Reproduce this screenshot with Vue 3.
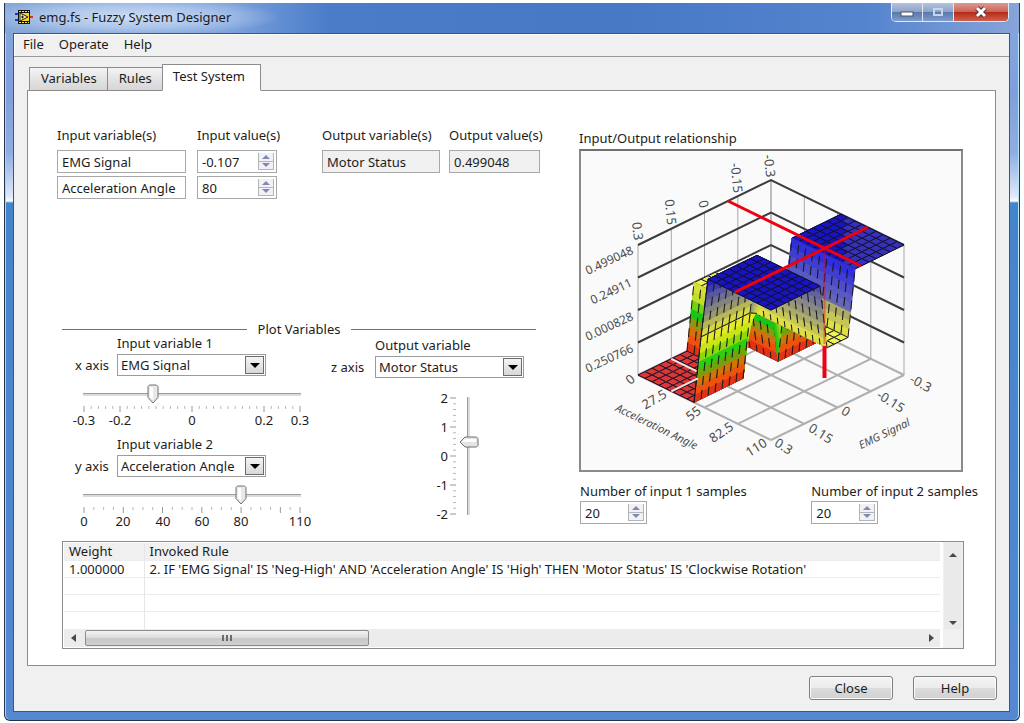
<script setup>
import { ref } from 'vue'

const menus = ['File', 'Operate', 'Help']
const inputs = ref([
  { id: 'in1', name: 'EMG Signal', value: '-0.107' },
  { id: 'in2', name: 'Acceleration Angle', value: '80' },
])
const samples = ref([
  { id: 's1', label: 'Number of input 1 samples', value: '20' },
  { id: 's2', label: 'Number of input 2 samples', value: '20' },
])

function range(n) {
  return Array.from({ length: n }, (_, i) => i)
}

const axes = ref([
  {
    id: 'x', axis: 'x axis', label: 'Input variable 1', option: 'EMG Signal',
    min: -0.3, max: 0.3, value: -0.107,
    ticks: range(31).map((i) => ({ x: 6 + i * 7.2, major: [0, 5, 15, 25, 30].includes(i) })),
    labels: [['-0.3', 6], ['-0.2', 42], ['0', 114], ['0.2', 186], ['0.3', 222]],
  },
  {
    id: 'y', axis: 'y axis', label: 'Input variable 2', option: 'Acceleration Angle',
    min: 0, max: 110, value: 80,
    ticks: range(23).map((i) => ({ x: 6 + (i * 216) / 22, major: i % 4 === 0 || i === 22 })),
    labels: [['0', 6], ['20', 45], ['40', 85], ['60', 124], ['80', 163], ['110', 222]],
  },
])
const output = ref(0.499)
const zTicks = range(21).map((i) => ({ y: 6 + i * 5.8, major: i % 5 === 0 }))
const zLabels = [['2', 6], ['1', 35], ['0', 64], ['-1', 93], ['-2', 122]]

/* Projection of the unit cube: u is the acceleration angle, v the EMG signal. */
function project(u, v, h) {
  return [638 + 133 * (u + v), 375 + 65 * (u - v) - 130 * h]
}
function points(list) {
  return list.map((p) => p.map((n) => n.toFixed(1)).join(',')).join(' ')
}
function height(i, j) {
  if (j >= 8 && j <= 11) return 0.5
  if (i <= 8) return 0
  return i === 9 ? 0.53 : 1
}

const stops = [
  [0, [220, 34, 26]], [0.1, [236, 84, 14]], [0.19, [196, 130, 10]], [0.28, [20, 200, 20]],
  [0.4, [190, 226, 10]], [0.52, [236, 236, 50]], [0.68, [150, 150, 110]],
  [0.84, [92, 92, 160]], [1, [26, 20, 190]],
]
function colour(h, shade) {
  let k = 1
  while (k < stops.length - 1 && h > stops[k][0]) k++
  const [h0, a] = stops[k - 1]
  const [h1, b] = stops[k]
  const t = Math.min(1, Math.max(0, (h - h0) / (h1 - h0)))
  const rgb = a.map((c, n) => Math.round((c + (b[n] - c) * t) * (1 - shade.mix) + shade.tone[n] * shade.mix))
  return `rgb(${rgb.join(',')})`
}
const plain = { mix: 0, tone: [0, 0, 0] }
const flatRed = { mix: 0.4, tone: [214, 90, 90] }
const pale = { mix: 0.4, tone: [255, 255, 140] }
const bluish = { mix: 0.45, tone: [60, 60, 255] }
const backlit = { mix: 0.6, tone: [72, 68, 176] }

const cells = []
for (let i = 0; i < 19; i++) {
  for (let j = 0; j < 19; j++) {
    const c = [height(i, j), height(i + 1, j), height(i + 1, j + 1), height(i, j + 1)]
    const steep = Math.max(...c) - Math.min(...c) > 0.05
    const n = steep ? 8 : 1
    const alongV = Math.abs(c[3] - c[0]) + Math.abs(c[2] - c[1]) > Math.abs(c[1] - c[0]) + Math.abs(c[2] - c[3])
    const at = (a, b) => {
      const h = c[0] * (1 - a) * (1 - b) + c[1] * a * (1 - b) + c[2] * a * b + c[3] * (1 - a) * b
      return { h, p: project((i + a) / 19, (j + b) / 19, h) }
    }
    const strips = []
    for (let k = 0; k < n; k++) {
      const a = k / n
      const b = (k + 1) / n
      const q = alongV ? [at(0, a), at(1, a), at(1, b), at(0, b)] : [at(a, 0), at(b, 0), at(b, 1), at(a, 1)]
      const h = q.reduce((s, e) => s + e.h, 0) / 4
      let shade = plain
      if (!steep && h < 0.1) shade = flatRed
      else if (!steep && h < 0.6) shade = pale
      else if (!steep && j >= 12 && (i + j) > 28) shade = backlit
      else if (steep && alongV && j >= 9 && h > 0.7) shade = bluish
      else if (steep && alongV && h > 0.4) shade = { mix: 0.25, tone: [200, 200, 120] }
      strips.push({ pts: points(q.map((e) => e.p)), fill: colour(h, shade) })
    }
    const edge = [at(0, 0).p, at(1, 0).p, at(1, 1).p, at(0, 1).p]
    let sides = [[...edge, edge[0]]]
    if (steep && alongV) sides = [[edge[0], edge[3]], [edge[1], edge[2]]]
    else if (steep) sides = [[edge[0], edge[1]], [edge[3], edge[2]]]
    cells.push({ depth: i - j, steep, strips, lines: sides.map(points) })
  }
}
cells.sort((a, b) => a.depth - b.depth)

const quarters = [0, 0.25, 0.5, 0.75, 1]
const floorLines = quarters.flatMap((q) => [
  points([project(q, 0, 0), project(q, 1, 0)]),
  points([project(0, q, 0), project(1, q, 0)]),
])
const posts = quarters.flatMap((q) => [
  points([project(0, q, 0), project(0, q, 1)]),
  points([project(q, 1, 0), project(q, 1, 1)]),
])
const levels = [0.25, 0.5, 0.75, 1].map((h) => points([project(0, 0, h), project(0, 1, h), project(1, 1, h)]))
const seams = [
  points([project(0, 0.25, 0), project(0.19, 0.25, 0)]),
  points([project(0.25, 0, 0), project(0.25, 0.2, 0)]),
]
const outline = [
  points([project(9 / 19, 0, 0.53), project(9 / 19, 7 / 19, 0.53)]),
  points([project(8 / 19, 0, 0), project(9 / 19, 0, 0.53), project(10 / 19, 0, 1)]),
]
const cursor = [
  points([project(0, 0.677, 1), project(1, 0.677, 1)]),
  points([project(0.727, 0, 1), project(0.727, 1, 1)]),
]

const marks = [
  ['-0.3', 770, 166, 84], ['-0.15', 737, 178, 84], ['0', 704, 204, 76], ['0.15', 671, 212, 84], ['0.3', 638, 231, 84],
  ['0.499048', 609, 260, -25, 'small'], ['0.24911', 611, 291, -25, 'small'],
  ['0.000828', 609, 326, -25, 'small'], ['0.250766', 609, 358, -25, 'small'],
  ['0', 630, 379, -40], ['27.5', 654, 399, -30], ['55', 693, 413, -36], ['82.5', 721, 432, -34], ['110', 756, 447, -32],
  ['0.3', 784, 446, 32], ['0.15', 821, 433, 32], ['0', 846, 411, 32], ['-0.15', 891, 401, 32], ['-0.3', 921, 383, 28],
]
</script>

<template>
  <div class="desktop">
    <div class="window">
      <header class="titlebar">
        <svg class="appicon" width="18" height="16" viewBox="0 0 18 16" aria-hidden="true">
          <path d="M0 5h4M0 11h4" stroke="#2038c8" stroke-width="2" />
          <path d="M14 8h4" stroke="#e03020" stroke-width="2" />
          <rect x="3" y="1" width="12" height="14" fill="#111" />
          <path d="M4 2.500h10M4 13.500h10" stroke="#f4e840" stroke-width="1" stroke-dasharray="2 1" />
          <rect x="4" y="4" width="10" height="8" fill="#f6d820" />
          <path d="M5 4l8 4-8 4z" fill="#fff48a" stroke="#222" stroke-width="1" />
          <path d="M6 8h3M7.500 6.500v3" stroke="#222" stroke-width="1" />
        </svg>
        <h1>emg.fs - Fuzzy System Designer</h1>
        <div class="controls">
          <button type="button" aria-label="Minimize">
            <svg width="16" height="14" viewBox="0 0 16 14"><rect x="2" y="7" width="12" height="4" fill="#fff" stroke="#4a5568" /></svg>
          </button>
          <button type="button" aria-label="Maximize">
            <svg width="16" height="14" viewBox="0 0 16 14"><rect x="4" y="4" width="8" height="6" fill="none" stroke="#c4d6ee" stroke-width="2" /></svg>
          </button>
          <button type="button" class="close" aria-label="Close window">
            <svg width="16" height="14" viewBox="0 0 16 14">
              <path d="M4 3l8 8M12 3l-8 8" stroke="#5a3038" stroke-width="5" />
              <path d="M4 3l8 8M12 3l-8 8" stroke="#fff" stroke-width="3" />
            </svg>
          </button>
        </div>
      </header>

      <div class="client">
        <nav class="menubar">
          <button v-for="m in menus" :key="m" type="button">{{ m }}</button>
        </nav>

        <div class="tabs" role="tablist">
          <button type="button" role="tab" aria-selected="false">Variables</button>
          <button type="button" role="tab" aria-selected="false">Rules</button>
          <button type="button" role="tab" aria-selected="true" class="active">Test System</button>
        </div>

        <main class="panel">
          <div class="columns">
            <section class="left">
              <div class="io">
                <div class="stack name">
                  <span class="cap">Input variable(s)</span>
                  <input v-for="f in inputs" :key="f.id" type="text" class="field" :value="f.name" aria-label="Input variable" readonly />
                </div>
                <div class="stack value">
                  <span class="cap">Input value(s)</span>
                  <div v-for="f in inputs" :key="f.id" class="spin">
                    <input v-model="f.value" type="text" :aria-label="f.name + ' value'" />
                    <span class="steps">
                      <button type="button" aria-label="Increase"><svg width="8" height="4" viewBox="0 0 8 4"><path d="M0 4l4-4 4 4z" /></svg></button>
                      <button type="button" aria-label="Decrease"><svg width="8" height="4" viewBox="0 0 8 4"><path d="M0 0h8l-4 4z" /></svg></button>
                    </span>
                  </div>
                </div>
                <div class="stack outname">
                  <label class="cap" for="on">Output variable(s)</label>
                  <input id="on" type="text" class="field shaded" value="Motor Status" readonly />
                </div>
                <div class="stack outvalue">
                  <label class="cap" for="ov">Output value(s)</label>
                  <input id="ov" type="text" class="field shaded" value="0.499048" readonly />
                </div>
              </div>

              <div class="divider"><h2>Plot Variables</h2></div>

              <div class="plotvars">
                <div class="inputs">
                  <div v-for="a in axes" :key="a.id" class="axis">
                    <label class="over" :for="'sel-' + a.id">{{ a.label }}</label>
                    <span class="side">{{ a.axis }}</span>
                    <span class="combo">
                      <select :id="'sel-' + a.id"><option>{{ a.option }}</option></select>
                      <span class="drop"><svg width="10" height="5" viewBox="0 0 10 5"><path d="M0 0h10l-5 5z" /></svg></span>
                    </span>
                    <div class="slide">
                      <input v-model="a.value" type="range" :min="a.min" :max="a.max" step="any" :aria-label="a.label" />
                      <svg class="scale" width="234" height="24" viewBox="0 0 234 24">
                        <line v-for="(t, n) in a.ticks" :key="n" :x1="t.x" :x2="t.x" y1="2" :y2="t.major ? 8 : 5" :class="{ major: t.major }" />
                        <text v-for="l in a.labels" :key="l[0]" :x="l[1]" y="21" text-anchor="middle">{{ l[0] }}</text>
                      </svg>
                    </div>
                  </div>
                </div>
                <div class="axis out">
                  <label class="over" for="sel-z">Output variable</label>
                  <span class="side">z axis</span>
                  <span class="combo">
                    <select id="sel-z"><option>Motor Status</option></select>
                    <span class="drop"><svg width="10" height="5" viewBox="0 0 10 5"><path d="M0 0h10l-5 5z" /></svg></span>
                  </span>
                  <div class="vslide">
                    <svg class="scale" width="28" height="128" viewBox="0 0 28 128">
                      <line v-for="(t, n) in zTicks" :key="n" :x1="t.major ? 19 : 22" x2="25" :y1="t.y" :y2="t.y" :class="{ major: t.major }" />
                      <text v-for="l in zLabels" :key="l[0]" x="17" :y="l[1] + 5" text-anchor="end">{{ l[0] }}</text>
                    </svg>
                    <input v-model="output" type="range" min="-2" max="2" step="any" aria-label="Output variable value" />
                  </div>
                </div>
              </div>
            </section>

            <section class="right">
              <h2>Input/Output relationship</h2>
              <div class="chart">
                <svg viewBox="581 151 380 319" role="img" aria-label="Surface plot of motor status over EMG signal and acceleration angle">
                  <polyline v-for="(l, n) in floorLines" :key="'f' + n" :points="l" class="floor" />
                  <polyline v-for="(l, n) in posts" :key="'p' + n" :points="l" class="post" />
                  <polyline v-for="(l, n) in levels" :key="'l' + n" :points="l" class="level" />
                  <g v-for="(c, n) in cells" :key="'c' + n">
                    <polygon v-for="(s, k) in c.strips" :key="k" :points="s.pts" :fill="s.fill" :stroke="s.fill" class="face" />
                    <polyline v-for="(l, k) in c.lines" :key="'e' + k" :points="l" :class="c.steep ? 'edge steep' : 'edge'" />
                  </g>
                  <polyline v-for="(l, n) in outline" :key="'o' + n" :points="l" class="edge" />
                  <polyline v-for="(l, n) in seams" :key="'s' + n" :points="l" class="seam" />
                  <polyline v-for="(l, n) in cursor" :key="'r' + n" :points="l" class="cursor" />
                  <line x1="824.500" x2="824.500" y1="248" y2="344" class="cursor faint" />
                  <line x1="824.500" x2="824.500" y1="346" y2="378" class="cursor drop-line" />
                  <text v-for="(m, n) in marks" :key="'m' + n" :x="m[1]" :y="m[2]" :transform="`rotate(${m[3]} ${m[1]} ${m[2]})`" :class="['mark', m[4]]">{{ m[0] }}</text>
                  <text x="657" y="426" transform="rotate(26 657 426)" class="mark title">Acceleration Angle</text>
                  <text x="884" y="433" transform="rotate(-26 884 433)" class="mark title">EMG Signal</text>
                </svg>
              </div>
              <div class="samples">
                <div v-for="s in samples" :key="s.id" class="sample">
                  <label :for="s.id">{{ s.label }}</label>
                  <div class="spin">
                    <input :id="s.id" v-model="s.value" type="text" />
                    <span class="steps">
                      <button type="button" aria-label="Increase"><svg width="8" height="4" viewBox="0 0 8 4"><path d="M0 4l4-4 4 4z" /></svg></button>
                      <button type="button" aria-label="Decrease"><svg width="8" height="4" viewBox="0 0 8 4"><path d="M0 0h8l-4 4z" /></svg></button>
                    </span>
                  </div>
                </div>
              </div>
            </section>
          </div>

          <div class="rules">
            <table>
              <thead><tr><th class="w">Weight</th><th>Invoked Rule</th></tr></thead>
              <tbody>
                <tr><td>1.000000</td><td>2. IF 'EMG Signal' IS 'Neg-High' AND 'Acceleration Angle' IS 'High' THEN 'Motor Status' IS 'Clockwise Rotation'</td></tr>
                <tr v-for="n in 3" :key="n"><td></td><td></td></tr>
              </tbody>
            </table>
            <div class="vbar">
              <button type="button" aria-label="Scroll up"><svg width="8" height="4" viewBox="0 0 8 4"><path d="M0 4l4-4 4 4z" /></svg></button>
              <button type="button" aria-label="Scroll down"><svg width="8" height="4" viewBox="0 0 8 4"><path d="M0 0h8l-4 4z" /></svg></button>
            </div>
            <div class="hbar">
              <button type="button" aria-label="Scroll left"><svg width="5" height="8" viewBox="0 0 5 8"><path d="M5 0v8l-5-4z" /></svg></button>
              <div class="groove"><div class="grip"><i></i><i></i><i></i></div></div>
              <button type="button" aria-label="Scroll right"><svg width="5" height="8" viewBox="0 0 5 8"><path d="M0 0l5 4-5 4z" /></svg></button>
            </div>
          </div>
        </main>

        <footer class="actions">
          <button type="button">Close</button>
          <button type="button">Help</button>
        </footer>
      </div>
    </div>
  </div>
</template>

<style>
body {
  background: #fff;
}
</style>

<style scoped>
.desktop {
  box-sizing: border-box;
  display: flex;
  min-height: 100vh;
  padding: 3px 4px 4px;
  font: 13px/18px "Noto Sans", "Open Sans", sans-serif;
  color: #1c1c1c;
}
.desktop *,
.desktop *::before,
.desktop *::after {
  box-sizing: border-box;
}
button,
input,
select {
  margin: 0;
  padding: 0;
  border: 0;
  border-radius: 0;
  background: none;
  font: inherit;
  color: inherit;
}
h1,
h2 {
  margin: 0;
  font: inherit;
}
.window {
  display: flex;
  flex: 1;
  flex-direction: column;
  min-width: 0;
  padding: 0 9px 8px 8px;
  border: 1px solid #24344c;
  border-top: 0;
  border-radius: 0 0 6px 6px;
  background: linear-gradient(#86a8dc 0, #7f9fdc 90px, #8eaee2 150px, #dfeafa 194px, #fff 198px, #4484cc 200px, #5588d0 100%);
  box-shadow: inset 1px 0 #b8d0f0, inset -1px 0 #b8e4f4;
}
.titlebar {
  display: flex;
  align-items: center;
  height: 30px;
  margin: 0 -9px 0 -8px;
  padding: 0 10px 0 9px;
  background:
    radial-gradient(ellipse 150px 20px at 125px 14px, rgba(214, 228, 246, 0.9) 0, rgba(190, 210, 240, 0.7) 55%, rgba(160, 190, 235, 0) 100%),
    linear-gradient(90deg, #86a8d8 0, #7ba2dc 22%, #4a7cc8 32%, #4678c4 60%, #5584ce 85%, #86a4d8 100%);
}
.appicon {
  margin: 0 6px 3px 1px;
}
.titlebar h1 {
  flex: 1;
  margin-bottom: 2px;
}
.controls {
  display: flex;
  align-self: flex-start;
  border: 1px solid #dfe9f6;
  border-top: 0;
  border-radius: 0 0 5px 5px;
  overflow: hidden;
}
.controls button {
  display: flex;
  align-items: center;
  justify-content: center;
  width: 31px;
  height: 18px;
  border-right: 1px solid #dfe6f2;
  background: linear-gradient(#b4c2dc 0, #8fa4c8 48%, #5878ac 50%, #7e9ccc 100%);
}
.controls .close {
  width: 54px;
  border: 0;
  background: linear-gradient(#dc9a90 0, #cc6458 48%, #b42818 50%, #d0604c 100%);
}
.client {
  display: flex;
  flex: 1;
  flex-direction: column;
  border: 1px solid #3c5878;
  background: #f0f0f0;
}
.menubar {
  display: flex;
  align-items: flex-start;
  gap: 15px;
  height: 23px;
  padding: 1px 9px;
  border-bottom: 1px solid #9a9a9a;
  box-shadow: inset 1px 1px #fff;
}
.tabs {
  display: flex;
  align-items: flex-end;
  height: 34px;
  margin: 0 13px -1px;
  padding-left: 2px;
}
.tabs button {
  position: relative;
  height: 24px;
  margin-right: -1px;
  padding: 0 10px 2px 11px;
  border: 1px solid #8c8c8c;
  background: linear-gradient(#f4f4f4, #e2e2e2 55%, #d6d6d6);
}
.tabs .active {
  height: 27px;
  padding: 0 15px 3px 10px;
  border-bottom-color: #fff;
  background: #fff;
}
.panel {
  display: flex;
  flex: 1;
  flex-direction: column;
  margin: 0 13px;
  border: 1px solid #8c8c8c;
  background: #fff;
}
.columns {
  display: grid;
  grid-template-columns: minmax(0, 1fr) 401px;
  padding: 35px 15px 0 28px;
}
.io {
  display: flex;
  align-items: flex-start;
  padding-left: 1px;
  height: 75px;
}
.stack {
  display: flex;
  flex-direction: column;
  gap: 3px;
}
.cap {
  height: 21px;
  white-space: nowrap;
}
.name {
  width: 129px;
  margin-right: 11px;
}
.value {
  width: 80px;
  margin-right: 45px;
}
.outname {
  width: 118px;
  margin-right: 9px;
}
.outvalue {
  width: 91px;
}
.field {
  width: 100%;
  height: 23px;
  padding: 0 4px;
  border: 1px solid #a8a8a8;
  background: #fff;
}
.shaded {
  background: #f0f0f0;
}
.spin {
  display: flex;
  height: 23px;
  border: 1px solid #a8a8a8;
  background: #fff;
}
.spin input {
  flex: 1;
  min-width: 0;
  padding-left: 4px;
}
.steps {
  display: flex;
  flex-direction: column;
  width: 16px;
  margin: 2px 2px 2px 0;
  border: 1px solid #b4b4b4;
  border-top: 0;
}
.steps button {
  display: flex;
  flex: 1;
  align-items: center;
  justify-content: center;
  background: #f2f2f6;
}
.steps button + button {
  border-top: 1px solid #b4b4b4;
}
.steps svg {
  fill: #8088b8;
}
.divider {
  display: flex;
  align-items: center;
  gap: 11px;
  margin: 121px 43px 0 6px;
  line-height: 14px;
}
.divider::before,
.divider::after {
  flex: 1;
  height: 1px;
  background: #707070;
  content: "";
}
.divider::before {
  flex-grow: 1;
}
.plotvars {
  display: flex;
  justify-content: space-between;
  padding: 0 55px 0 19px;
  line-height: 14px;
}
.inputs {
  display: flex;
  flex-direction: column;
  gap: 9px;
}
.axis {
  display: grid;
  grid-template-columns: 32px 149px;
  grid-template-rows: 14px 22px auto;
  column-gap: 10px;
  row-gap: 4px;
  align-content: start;
}
.axis.out {
  column-gap: 12px;
  padding-top: 2px;
}
.over {
  grid-column: 2;
}
.side {
  align-self: center;
  white-space: nowrap;
}
.combo {
  position: relative;
}
.combo select {
  display: block;
  width: 100%;
  height: 22px;
  padding: 0 20px 0 3px;
  border: 1px solid #9c9c9c;
  background: #fff;
  appearance: none;
}
.drop {
  position: absolute;
  top: 2px;
  right: 2px;
  display: flex;
  align-items: center;
  justify-content: center;
  width: 19px;
  height: 18px;
  border: 1px solid #6c6c6c;
  background: linear-gradient(#f4f4f4, #d8d8d8);
  pointer-events: none;
}
.slide {
  grid-column: 1 / 3;
  width: 234px;
  margin: 3px -40px 0 3px;
}
.slide input {
  display: block;
  width: 228px;
  height: 21px;
  background: linear-gradient(#9c9c9c 1px, #dcdcdc 1px) 50% 10px / 218px 3px no-repeat;
  appearance: none;
}
.slide input::-webkit-slider-thumb {
  width: 12px;
  height: 20px;
  background: url("data:image/svg+xml,%3Csvg xmlns='http://www.w3.org/2000/svg' width='12' height='20'%3E%3Cpath d='M2.500 1h7l1.500 1.500v11L6 19l-5-5.500v-11z' fill='%23e8e8e8' stroke='%23707070'/%3E%3Cpath d='M3 3h3v13l-3-3z' fill='%23fff'/%3E%3C/svg%3E") no-repeat;
  appearance: none;
}
.scale {
  display: block;
  overflow: visible;
}
.scale line {
  stroke: #b8b8b8;
}
.scale .major {
  stroke: #989898;
}
.scale text {
  fill: #1c1c1c;
}
.vslide {
  grid-column: 2;
  display: flex;
  margin-top: 10px;
  padding-left: 56px;
}
.vslide input {
  width: 20px;
  height: 128px;
  background: linear-gradient(90deg, #9c9c9c 1px, #dcdcdc 1px) 8px 50% / 3px 118px no-repeat;
  writing-mode: vertical-lr;
  direction: rtl;
  appearance: none;
}
.vslide input::-webkit-slider-thumb {
  width: 20px;
  height: 12px;
  background: url("data:image/svg+xml,%3Csvg xmlns='http://www.w3.org/2000/svg' width='20' height='12'%3E%3Cpath d='M19 2.500v7L17.500 11H6L1 6l5-5h11.500z' fill='%23e4e4e4' stroke='%23707070'/%3E%3Cpath d='M17 3v3H3l3-3z' fill='%23fff'/%3E%3C/svg%3E") no-repeat;
  appearance: none;
}
.right {
  padding-top: 3px;
}
.chart {
  width: 384px;
  margin-top: 2px;
  border: 2px solid #8a8a8a;
  border-top-color: #707070;
  background: #fafafa;
}
.chart svg {
  display: block;
  width: 100%;
}
.chart polyline {
  fill: none;
}
.floor {
  stroke: #b0b0b0;
  stroke-width: 2;
}
.post {
  stroke: #a8a8a8;
  stroke-width: 1;
}
.level {
  stroke: #3c3c3c;
  stroke-width: 2;
}
.face {
  stroke-width: 1;
}
.edge {
  stroke: #10102c;
  stroke-width: 1;
}
.steep {
  stroke: #181818;
  stroke-dasharray: 9 5;
}
.seam {
  stroke: #f4e4e4;
  stroke-width: 2;
}
.cursor {
  stroke: #f00010;
  stroke-width: 3;
}
.faint {
  stroke-width: 2;
  opacity: 0.4;
}
.drop-line {
  stroke-width: 4;
}
.mark {
  fill: #4c4c4c;
  font-size: 13px;
  text-anchor: middle;
  dominant-baseline: central;
}
.small {
  font-size: 12px;
}
.title {
  font-size: 11px;
  font-style: italic;
}
.samples {
  display: flex;
  justify-content: space-between;
  padding: 10px 2px 0 1px;
}
.sample label {
  display: block;
  white-space: nowrap;
}
.sample .spin {
  width: 67px;
  margin-top: 1px;
}
.rules {
  display: grid;
  grid-template-columns: minmax(0, 1fr) 18px;
  grid-template-rows: auto 18px;
  gap: 0 4px;
  margin: 12px 31px 16px 34px;
  padding: 1px;
  border: 1px solid #8c8c8c;
  background: linear-gradient(90deg, transparent calc(100% - 20px), #f0f0f0 0);
}
.rules table {
  width: 100%;
  border-collapse: collapse;
  table-layout: fixed;
  line-height: 16px;
}
.rules th,
.rules td {
  height: 17px;
  padding: 0 5px;
  border-bottom: 1px solid #ececec;
  font-weight: normal;
  text-align: left;
  white-space: nowrap;
}
.rules th {
  background: #f0f0f0;
}
.rules tr > :first-child {
  border-right: 1px solid #e6e6e6;
}
.rules .w {
  width: 80px;
}
.rules tr:last-child td {
  border-bottom-color: transparent;
}
.vbar {
  display: flex;
  flex-direction: column;
  justify-content: space-between;
  background: #eaeaea;
}
.vbar button {
  height: 18px;
}
.vbar svg,
.hbar svg {
  display: inline-block;
  fill: #484848;
}
.hbar {
  display: flex;
  background: #ececec;
}
.hbar button {
  display: flex;
  align-items: center;
  justify-content: center;
  width: 18px;
}
.groove {
  flex: 1;
  padding: 1px 3px;
}
.grip {
  display: flex;
  align-items: center;
  justify-content: center;
  gap: 2px;
  width: 34%;
  height: 16px;
  border: 1px solid #8c8c8c;
  border-radius: 2px;
  background: linear-gradient(#f4f4f4, #dedede 45%, #c8c8c8 55%, #d0d0d0);
}
.grip i {
  width: 2px;
  height: 6px;
  background: #6c6c6c;
}
.actions {
  display: flex;
  justify-content: flex-end;
  gap: 20px;
  padding: 10px 12px 11px;
}
.actions button {
  width: 84px;
  height: 24px;
  border: 1px solid #808080;
  border-radius: 3px;
  background: linear-gradient(#f4f4f4, #ebebeb 48%, #dcdcdc 52%, #d0d0d0);
  box-shadow: inset 0 0 0 1px #fafafa;
}
</style>
